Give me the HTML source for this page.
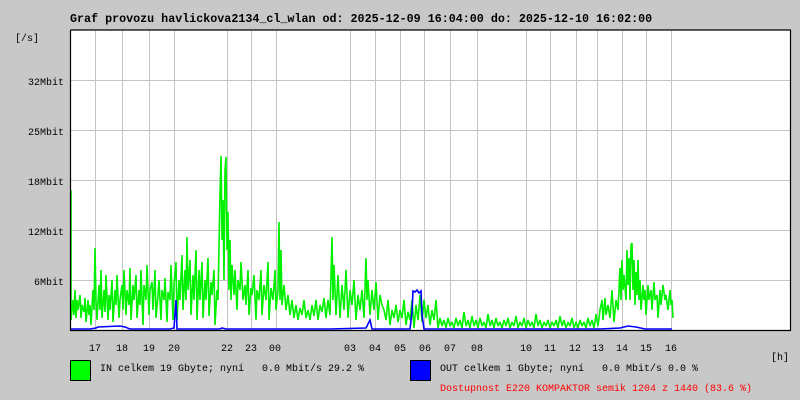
<!DOCTYPE html>
<html><head><meta charset="utf-8"><style>
html,body{margin:0;padding:0;background:#c8c8c8;width:800px;height:400px;overflow:hidden}
svg{display:block}
text{font-family:"Liberation Mono",monospace;white-space:pre}
</style></head><body>
<svg width="800" height="400" xmlns="http://www.w3.org/2000/svg" xml:space="preserve">
<rect width="800" height="400" fill="#c8c8c8"/>
<text x="70" y="22" font-size="11.7" font-weight="bold" fill="#000">Graf provozu havlickova2134_cl_wlan od: 2025-12-09 16:04:00 do: 2025-12-10 16:02:00</text>
<rect x="70" y="30" width="720" height="300" fill="#fff"/>
<g stroke="#c4c4c4" stroke-width="1">
<path d="M70 80.5H790M70 130.5H790M70 180.5H790M70 230.5H790M70 280.5H790"/>
<path d="M95.5 30V330M122.5 30V330M149.5 30V330M174.5 30V330M227.5 30V330M251.5 30V330M276.5 30V330M350.5 30V330M375.5 30V330M400.5 30V330M424.5 30V330M450.5 30V330M477.5 30V330M526.5 30V330M550.5 30V330M576.5 30V330M597.5 30V330M622.5 30V330M646.5 30V330M671.5 30V330"/>
</g>
<g fill="none" stroke="#00f000" stroke-width="1.6" stroke-linejoin="bevel">
<polyline points="71,190 71,320 73,300 74,315 75,290 76,318 77,300 78,310 80,295 81,318 82,305 84,312 85,298 86,322 88,300 89,315 90,305 91,325 93,290 94,310 95,248 96,300 97,320 99,285 100,310 101,270 102,318 104,290 105,312 106,275 108,320 109,295 110,310 112,280 113,322 115,290 116,305 117,275 119,318 120,300 122,285 123,310 124,270 126,315 127,290 129,305 130,268 131,320 133,285 134,300 136,275 137,318 139,290 140,305 141,270 143,325 144,285 146,300 147,265 149,315 150,290 152,282 153,310 155,270 156,318 158,295 159,280 161,320 162,290 164,300 165,278 167,322 168,292 170,300 171,265 173,320 174,285 176,262 177,320 179,280 180,300 182,255 183,310 185,270 186,300 187,237 188,290 190,260 191,315 193,275 194,300 196,250 197,320 199,270 200,300 202,262 203,318 205,280 206,300 208,258 209,316 211,282 212,295 214,270 215,325 217,290 218,300 220,195 221,156 222,240 223,200 224,280 225,170 226,157 227,250 228,212 229,290 230,240 231,300 232,265 234,295 235,270 237,310 238,280 240,290 241,262 243,300 245,285 246,305 248,270 249,315 251,288 252,295 254,275 256,320 257,290 259,300 261,270 262,315 264,285 266,300 268,262 269,320 271,288 273,300 275,270 276,310 278,290 279,222 280,300 281,250 282,305 284,285 286,310 288,295 290,315 292,300 294,318 296,305 298,320 300,308 302,315 304,300 306,318 308,310 310,320 312,305 314,316 316,300 318,320 320,305 322,312 324,298 326,318 328,300 330,315 332,237 333,300 334,265 336,315 338,275 340,318 342,285 344,310 346,270 348,318 350,290 352,305 354,280 356,320 358,295 360,310 362,290 364,318 366,258 367,300 368,280 370,315 372,290 374,310 376,282 378,320 380,295 382,305 384,310 386,320 388,300 390,325 392,310 394,318 396,305 398,322 400,310 402,318 404,300 406,325 408,312 410,320 412,300 414,328 416,305 418,320 420,295 422,322 424,300 426,318 428,305 430,325 432,310 434,320 436,300 438,328 440,318 442,326 444,320 446,328 448,318 450,326 452,322 454,328 456,318 458,326 460,320 462,328 464,312 466,326 468,320 470,328 472,316 474,326 476,320 478,328 480,318 482,326 484,322 486,328 488,314 490,326 492,320 494,328 496,318 498,326 500,322 502,328 504,320 506,326 508,318 510,328 512,322 514,326 516,316 518,328 520,322 522,326 524,318 526,328 528,320 530,326 532,322 534,328 536,314 538,326 540,320 542,328 544,322 546,326 548,320 550,328 552,322 554,326 556,320 558,328 560,316 562,326 564,320 566,328 568,322 570,326 572,318 574,328 576,322 578,328 580,320 582,326 584,322 586,328 588,318 590,326 592,320 594,328 596,314 598,326 600,310 602,300 603,320 605,298 606,315 608,305 610,318 612,290 614,322 616,300 618,310 620,268 621,300 622,260 623,290 624,275 626,300 627,250 628,285 629,258 630,300 631,245 632,243 633,290 634,260 635,305 636,272 637,295 638,260 639,300 640,280 641,310 643,285 644,300 645,290 646,315 648,285 649,300 651,290 652,310 654,282 655,300 657,295 658,318 660,290 661,305 663,285 665,300 666,295 668,310 670,290 671,305 672,300 673,318"/>
</g>
<g fill="none" stroke="#0000ff" stroke-width="1.6">
<polyline points="71,329 90,329 96,328 98,327 120,326 125,327 130,329 170,329 174,328 176,300 177,329 200,329 220,329 222,328 226,329 270,329 330,329 366,328 370,320 372,329 410,329 412,312 413,291 415,292 417,290 419,293 421,291 422,315 424,329 440,329 600,329 620,328 628,326 636,327 645,329 672,329"/>
</g>
<path d="M70.5 30V330.5H790.5V30H70.5" fill="none" stroke="#000" stroke-width="1.2"/>
<g font-size="10" fill="#000">
<text x="15" y="41">[/s]</text>
<text x="64" y="85" text-anchor="end">32Mbit</text>
<text x="64" y="135" text-anchor="end">25Mbit</text>
<text x="64" y="185" text-anchor="end">18Mbit</text>
<text x="64" y="235" text-anchor="end">12Mbit</text>
<text x="64" y="285" text-anchor="end">6Mbit</text>
<g text-anchor="middle">
<text x="95" y="351">17</text><text x="122" y="351">18</text><text x="149" y="351">19</text><text x="174" y="351">20</text>
<text x="227" y="351">22</text><text x="251" y="351">23</text><text x="275" y="351">00</text>
<text x="350" y="351">03</text><text x="375" y="351">04</text><text x="400" y="351">05</text><text x="425" y="351">06</text>
<text x="450" y="351">07</text><text x="477" y="351">08</text><text x="526" y="351">10</text><text x="550" y="351">11</text>
<text x="575" y="351">12</text><text x="598" y="351">13</text><text x="622" y="351">14</text><text x="646" y="351">15</text><text x="671" y="351">16</text>
</g>
<text x="771" y="360">[h]</text>
<text x="100" y="371">IN celkem 19 Gbyte; nyní   0.0 Mbit/s 29.2 %</text>
<text x="440" y="371">OUT celkem 1 Gbyte; nyní   0.0 Mbit/s 0.0 %</text>
<text x="440" y="391" fill="#ff0000">Dostupnost E220 KOMPAKTOR semik 1204 z 1440 (83.6 %)</text>
</g>
<rect x="70.5" y="360.5" width="20" height="20" fill="#00ff00" stroke="#000"/>
<rect x="410.5" y="360.5" width="20" height="20" fill="#0000ff" stroke="#000"/>
</svg>
</body></html>
